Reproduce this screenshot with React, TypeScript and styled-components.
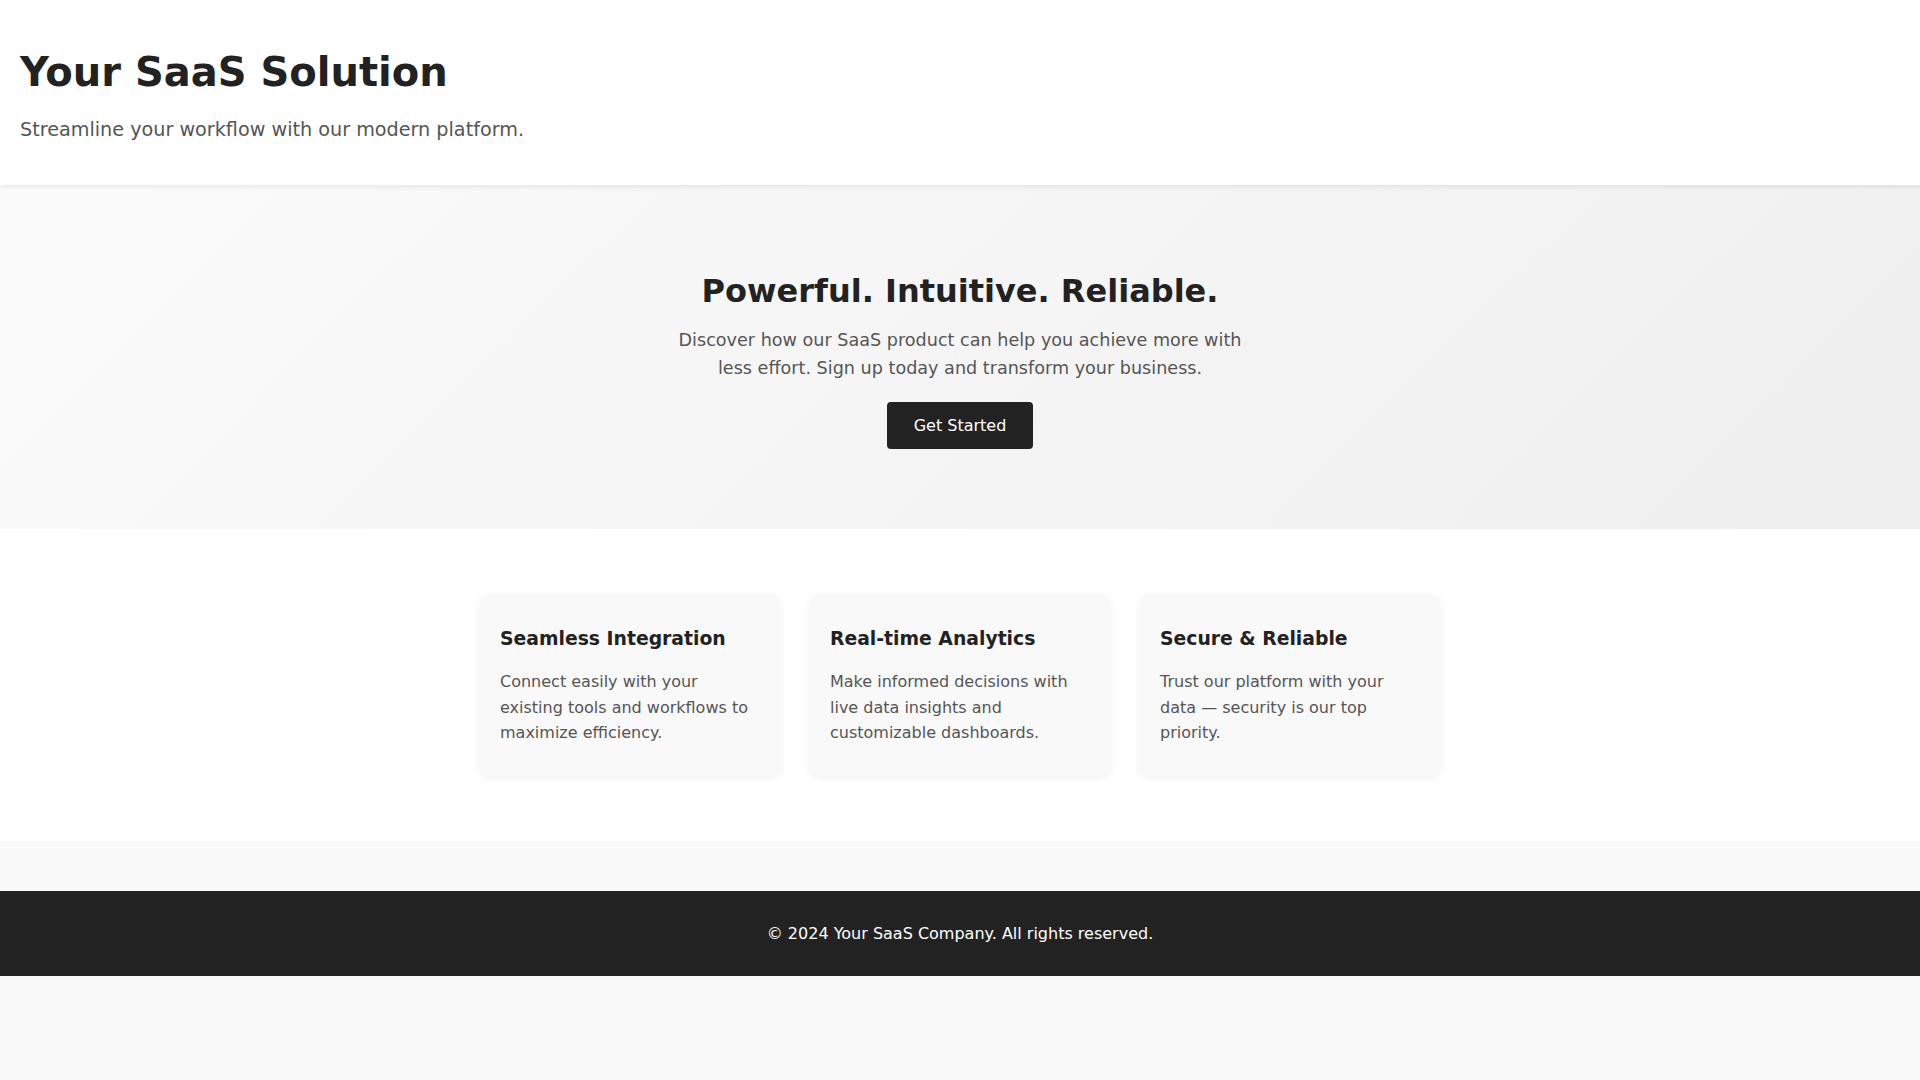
import React from 'react'
import styled, { createGlobalStyle } from 'styled-components'

const GlobalStyle = createGlobalStyle`
  html, body {
    margin: 0;
    padding: 0;
    background: #f9f9f9;
    font-family: 'DejaVu Sans', 'Noto Sans', sans-serif;
    color: #222;
  }
  * {
    box-sizing: border-box;
  }
`

interface Feature {
  title: string;
  text: string;
}

const features: Feature[] = [
  {
    title: 'Seamless Integration',
    text: 'Connect easily with your existing tools and workflows to maximize efficiency.',
  },
  {
    title: 'Real-time Analytics',
    text: 'Make informed decisions with live data insights and customizable dashboards.',
  },
  {
    title: 'Secure & Reliable',
    text: 'Trust our platform with your data \u2014 security is our top priority.',
  },
]

const StyledHeader = styled.header`
  background: #fff;
  padding: 49px 20px 44px;
  box-shadow: 0 2px 5px rgba(0, 0, 0, 0.08);
  position: relative;
  z-index: 1;

  h1 {
    margin: 0;
    font-size: 40px;
    line-height: 46px;
    font-weight: 700;
    color: #222;
  }

  p {
    margin: 24px 0 0;
    font-size: 19.2px;
    line-height: 22px;
    color: #555;
  }
`

const StyledHero = styled.section`
  background: linear-gradient(135deg, #fbfbfb 0%, #efefef 100%);
  padding: 88px 20px 80px;
  text-align: center;

  h2 {
    margin: 0;
    font-size: 32px;
    line-height: 37px;
    font-weight: 700;
    color: #222;
  }

  p {
    max-width: 600px;
    margin: 16px auto 20px;
    font-size: 17.6px;
    line-height: 28px;
    color: #555;
  }
`

const StyledButton = styled.button`
  display: inline-block;
  border: 0;
  border-radius: 4px;
  background: #222;
  color: #fff;
  font-family: 'DejaVu Sans', sans-serif;
  font-size: 16px;
  line-height: 19px;
  padding: 14px 27px;
  cursor: pointer;

  &:hover {
    opacity: 0.9;
  }
`

const StyledFeatures = styled.section`
  background: #fff;
  padding: 66px 20px 65px;
`

const StyledFeatureGrid = styled.div`
  display: grid;
  grid-template-columns: repeat(3, 300px);
  gap: 30px;
  justify-content: center;
`

const StyledCard = styled.div`
  background: #f9f9f9;
  border-radius: 8px;
  box-shadow: 0 2px 8px rgba(0, 0, 0, 0.06);
  padding: 33px 20px 30px;

  h3 {
    margin: 0 0 19px;
    font-size: 18.8px;
    line-height: 22px;
    font-weight: 700;
    color: #222;
  }

  p {
    margin: 0;
    font-size: 16px;
    line-height: 25.6px;
    color: #555;
  }
`

const StyledFooter = styled.footer`
  margin-top: 50px;
  background: #222;
  color: #fff;
  text-align: center;
  padding: 30px 20px;

  p {
    margin: 0;
    font-size: 16px;
    line-height: 25.6px;
  }
`

const App = () => {
  return (
    <>
      <GlobalStyle />
      <StyledHeader>
        <h1>Your SaaS Solution</h1>
        <p>Streamline your workflow with our modern platform.</p>
      </StyledHeader>

      <StyledHero>
        <h2>Powerful. Intuitive. Reliable.</h2>
        <p>
          Discover how our SaaS product can help you achieve more with less effort. Sign up today
          and transform your business.
        </p>
        <StyledButton>Get Started</StyledButton>
      </StyledHero>

      <StyledFeatures>
        <StyledFeatureGrid>
          {features.map((f) => (
            <StyledCard key={f.title}>
              <h3>{f.title}</h3>
              <p>{f.text}</p>
            </StyledCard>
          ))}
        </StyledFeatureGrid>
      </StyledFeatures>

      <StyledFooter>
        <p>&copy; 2024 Your SaaS Company. All rights reserved.</p>
      </StyledFooter>
    </>
  )
}

export default App
